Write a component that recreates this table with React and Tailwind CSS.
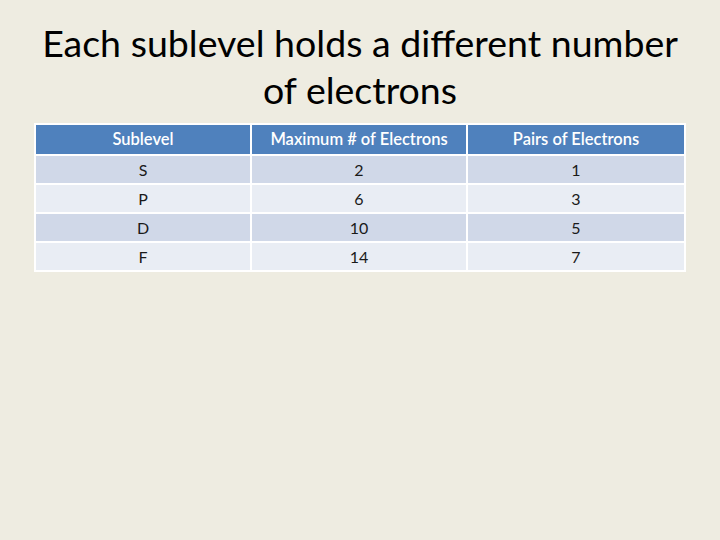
const rows = [
  ["S", "2", "1"],
  ["P", "6", "3"],
  ["D", "10", "5"],
  ["F", "14", "7"],
];

export default function App() {
  return (
    <div
      className="w-[720px] h-[540px] bg-[#eeece1] flex flex-col items-center pt-[19px]"
      style={{ fontFamily: "Lato, 'Open Sans', sans-serif" }}
    >
      <h1 className="text-[37.5px] leading-[47px] text-black text-center w-[670px]">
        Each sublevel holds a different number of electrons
      </h1>

      <table className="mt-[10px] w-[652px] border-collapse border-2 border-white text-[16px] text-[#1a1a1a] table-fixed">
        <thead>
          <tr className="bg-[#4f81bd] text-white h-[31px]">
            <th className="text-[16.5px] font-semibold border-2 border-white w-[216px]">Sublevel</th>
            <th className="text-[16.5px] font-semibold border-2 border-white w-[216px]">Maximum # of Electrons</th>
            <th className="text-[16.5px] font-semibold border-2 border-white">Pairs of Electrons</th>
          </tr>
        </thead>
        <tbody>
          {rows.map((r, i) => (
            <tr key={r[0]} className={`h-[29px] ${i % 2 === 0 ? "bg-[#d0d8e8]" : "bg-[#e9edf4]"}`}>
              {r.map((c, j) => (
                <td key={j} className="text-center border-2 border-white">
                  {c}
                </td>
              ))}
            </tr>
          ))}
        </tbody>
      </table>
    </div>
  );
}
